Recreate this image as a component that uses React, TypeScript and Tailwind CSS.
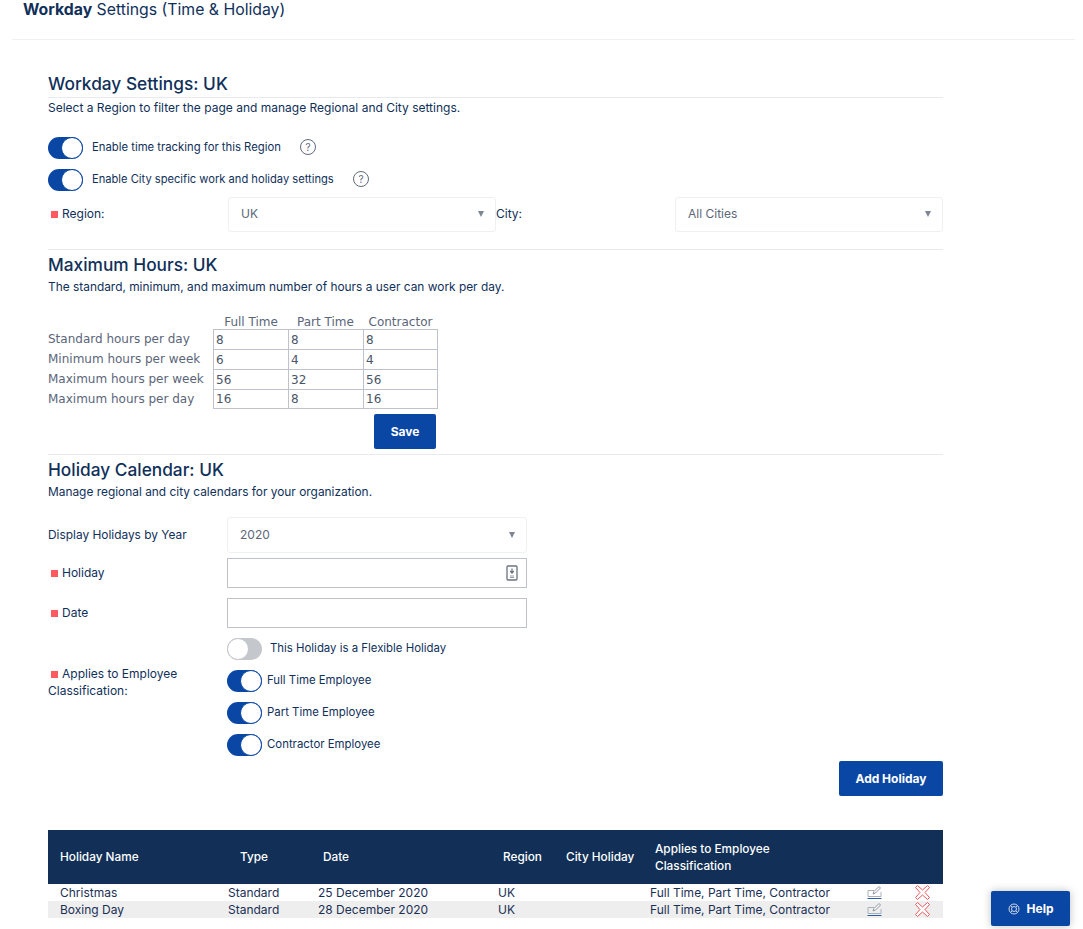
const inter = "font-['Inter',sans-serif]";

function Toggle({ on = true }: { on?: boolean }) {
  return on ? (
    <div className="w-[35px] h-[22px] rounded-full bg-[#0a47a5] flex justify-end shrink-0">
      <div className="w-[22px] h-[22px] rounded-full bg-white border border-[#0a47a5]" />
    </div>
  ) : (
    <div className="w-[35px] h-[22px] rounded-full bg-[#c4c7cc] flex justify-start shrink-0">
      <div className="w-[22px] h-[22px] rounded-full bg-white border border-[#c4c7cc]" />
    </div>
  );
}

function QMark() {
  return (
    <div className="w-[16px] h-[16px] mb-[2px] rounded-full border border-[#5f6b7c] flex items-center justify-center text-[10px] leading-none text-[#5f6b7c]">
      ?
    </div>
  );
}

function Req() {
  return <span className="inline-block w-[7px] h-[7px] bg-[#ff5a5f] mr-[4px] ml-[3px] align-[0px]" />;
}

function Select({ value, className }: { value: string; className: string }) {
  return (
    <div className={`border border-[#eef0f3] rounded-[3px] flex items-center justify-between pl-[12px] pr-[11px] text-[12px] text-[#5c6678] ${className}`}>
      <span>{value}</span>
      <span className="w-0 h-0 border-l-[3.5px] border-r-[3.5px] border-t-[6px] border-l-transparent border-r-transparent border-t-[#7d8593]" />
    </div>
  );
}

const hours = [
  ["Standard hours per day", "8", "8", "8"],
  ["Minimum hours per week", "6", "4", "4"],
  ["Maximum hours per week", "56", "32", "56"],
  ["Maximum hours per day", "16", "8", "16"],
];

function Cell({ v, last }: { v: string; last: boolean }) {
  return (
    <div className={`${last ? "h-[20px]" : "h-[21px]"} w-[76px] last:w-[75px] -ml-px first:ml-0 border border-[#bfc2cc] pl-[2px] flex items-center text-[12px] text-[#4a5568]`}>
      {v}
    </div>
  );
}

function HoursTable() {
  return (
    <div className="mt-[16px] font-['DejaVu_Sans',sans-serif] text-[12px] text-[#5b6579]">
      <div className="flex h-[18px] pl-[165px] pt-[3px] items-center">
        <span className="w-[76px] text-center">Full Time</span>
        <span className="w-[73px] text-center">Part Time</span>
        <span className="w-[77px] text-center">Contractor</span>
      </div>
      {hours.map((r, i) => (
        <div key={r[0]} className="flex h-[20px]">
          <div className="w-[165px] whitespace-nowrap leading-[20px]">{r[0]}</div>
          <div className="flex items-start">
            <Cell v={r[1]} last={i === 3} />
            <Cell v={r[2]} last={i === 3} />
            <Cell v={r[3]} last={i === 3} />
          </div>
        </div>
      ))}
    </div>
  );
}

function Btn({ children, className }: { children: React.ReactNode; className: string }) {
  return (
    <div className={`h-[35px] bg-[#0a47a5] rounded-[2px] text-white text-[12px] font-bold flex items-center justify-center ${className}`}>
      {children}
    </div>
  );
}

function EditIcon() {
  return (
    <svg width="15" height="15" viewBox="0 0 15 15" fill="none">
      <path d="M1 5.5H7M1 5.5V11.5H14V7" stroke="#aab0ba" strokeWidth="1" />
      <path d="M6 9L7 6.5L12 1.5L13.5 3L8.5 8Z" stroke="#8d94a0" strokeWidth="1" fill="white" />
      <path d="M0.5 13.5H14.5" stroke="#2a5fae" strokeWidth="1" />
    </svg>
  );
}

function XIcon() {
  return (
    <svg width="15" height="15" viewBox="0 0 15 15" fill="none">
      <path
        d="M2.5 0.5L7.5 5L12.5 0.5L14.5 2.5L10 7.5L14.5 12.5L12.5 14.5L7.5 10L2.5 14.5L0.5 12.5L5 7.5L0.5 2.5Z"
        stroke="#f0575c"
        strokeWidth="1"
        fill="white"
      />
    </svg>
  );
}

function Row({ name, date, shaded }: { name: string; date: string; shaded?: boolean }) {
  return (
    <div className={`h-[17px] flex items-center text-[12px] text-[#1a2f55] ${shaded ? "bg-[#eeeeee]" : "bg-white"}`}>
      <span className="w-[180px] pl-[12px]">{name}</span>
      <span className="w-[90px]">Standard</span>
      <span className="w-[180px]">{date}</span>
      <span className="w-[152px]">UK</span>
      <span className="w-[217px]">Full Time, Part Time, Contractor</span>
      <span className="w-[48px] flex"><EditIcon /></span>
      <span className="flex"><XIcon /></span>
    </div>
  );
}

export default function App() {
  return (
    <div className={`${inter} relative w-[1083px] h-[929px] bg-white overflow-hidden text-[#10305a]`}>
      <div className="ml-[12px] w-[1063px] h-[40px] border-b border-[#eef0f2] pl-[11px]">
        <div className="text-[15.8px] leading-[19px] whitespace-nowrap">
          <span className="font-bold">Workday</span> Settings (Time &amp; Holiday)
        </div>
      </div>

      <div className="w-[895px] ml-[48px]">
        <div className="mt-[33px] h-[25px] border-b border-[#e8eaed] text-[17.3px] leading-[22px] font-medium">Workday Settings: UK</div>
        <div className="mt-[2px] text-[12px] leading-[16px]">Select a Region to filter the page and manage Regional and City settings.</div>

        <div className="mt-[21px] flex items-center h-[22px] text-[11.3px] whitespace-nowrap">
          <Toggle />
          <span className="ml-[9px] w-[208px] pb-[2px]">Enable time tracking for this Region</span>
          <QMark />
        </div>
        <div className="mt-[10px] flex items-center h-[22px] text-[11.15px] whitespace-nowrap">
          <Toggle />
          <span className="ml-[9px] w-[261px] pb-[2px]">Enable City specific work and holiday settings</span>
          <QMark />
        </div>

        <div className="mt-[6px] flex items-center text-[12px]">
          <div className="w-[180px] pb-[2px]"><Req />Region:</div>
          <Select value="UK" className="w-[268px] h-[35px] pb-[2px]" />
          <div className="w-[179px] pb-[2px]">City:</div>
          <Select value="All Cities" className="w-[268px] h-[35px] pb-[2px]" />
        </div>

        <div className="mt-[17px] border-t border-[#e8eaed] pt-[4px] text-[17.3px] leading-[22px] font-medium">Maximum Hours: UK</div>
        <div className="mt-[3px] text-[11.9px] leading-[16px]">The standard, minimum, and maximum number of hours a user can work per day.</div>

        <HoursTable />

        <div className="ml-[326px] mt-[5px]"><Btn className="w-[62px]">Save</Btn></div>

        <div className="mt-[5px] border-t border-[#e8eaed] pt-[4px] text-[17.3px] leading-[22px] font-medium">Holiday Calendar: UK</div>
        <div className="mt-[3px] text-[11.9px] leading-[16px]">Manage regional and city calendars for your organization.</div>

        <div className="mt-[17px] flex items-center text-[11.9px]">
          <div className="w-[179px]">Display Holidays by Year</div>
          <Select value="2020" className="w-[300px] h-[36px]" />
        </div>

        <div className="mt-[5px] flex items-center text-[12px]">
          <div className="w-[179px]"><Req />Holiday</div>
          <div className="w-[300px] h-[30px] border border-[#bfc2cc] flex items-center justify-end pr-[8px]">
            <svg width="12" height="16" viewBox="0 0 12 16" fill="none">
              <rect x="1" y="1" width="10" height="14" rx="1" stroke="#6b7280" strokeWidth="1.3" />
              <path d="M6 3.5V7.5M4.2 6L6 8L7.8 6" stroke="#6b7280" strokeWidth="1.2" />
              <path d="M4 11H8M4 12.5H8" stroke="#9aa0aa" strokeWidth="1" />
            </svg>
          </div>
        </div>

        <div className="mt-[10px] flex items-center text-[12px]">
          <div className="w-[179px]"><Req />Date</div>
          <div className="w-[300px] h-[30px] border border-[#bfc2cc]" />
        </div>

        <div className="mt-[10px] flex items-start text-[12px]">
          <div className="w-[179px] pt-[27px] leading-[17px]">
            <Req />Applies to Employee<br />Classification:
          </div>
          <div className="flex flex-col gap-[10px] text-[11.4px]">
            <div className="flex items-center"><Toggle on={false} /><span className="ml-[8px]">This Holiday is a Flexible Holiday</span></div>
            <div className="flex items-center"><Toggle /><span className="ml-[5px]">Full Time Employee</span></div>
            <div className="flex items-center"><Toggle /><span className="ml-[5px]">Part Time Employee</span></div>
            <div className="flex items-center"><Toggle /><span className="ml-[5px]">Contractor Employee</span></div>
          </div>
        </div>

        <div className="mt-[5px] flex justify-end"><Btn className="w-[104px]">Add Holiday</Btn></div>

        <div className="mt-[34px] h-[54px] pt-[2px] bg-[#112f57] text-white text-[11.8px] font-medium flex items-center">
          <span className="w-[192px] pl-[12px]">Holiday Name</span>
          <span className="w-[83px]">Type</span>
          <span className="w-[180px]">Date</span>
          <span className="w-[63px]">Region</span>
          <span className="w-[89px]">City Holiday</span>
          <span className="leading-[17px]">Applies to Employee<br />Classification</span>
        </div>
        <Row name="Christmas" date="25 December 2020" />
        <Row name="Boxing Day" date="28 December 2020" shaded />
      </div>

      <div className="absolute left-[991px] top-[891px] w-[79px] h-[35px] bg-[#0a47a5] rounded-[2px] text-white text-[12px] font-bold flex items-center justify-center gap-[7px] shadow-[0_0_8px_rgba(0,0,0,0.25)]">
        <svg width="12" height="12" viewBox="0 0 12 12" fill="none" stroke="#c9d4e6" strokeWidth="1">
          <circle cx="6" cy="6" r="5" />
          <circle cx="6" cy="6" r="2.5" />
          <path d="M2.5 2.5L4.2 4.2M9.5 2.5L7.8 4.2M2.5 9.5L4.2 7.8M9.5 9.5L7.8 7.8" />
        </svg>
        Help
      </div>
    </div>
  );
}
